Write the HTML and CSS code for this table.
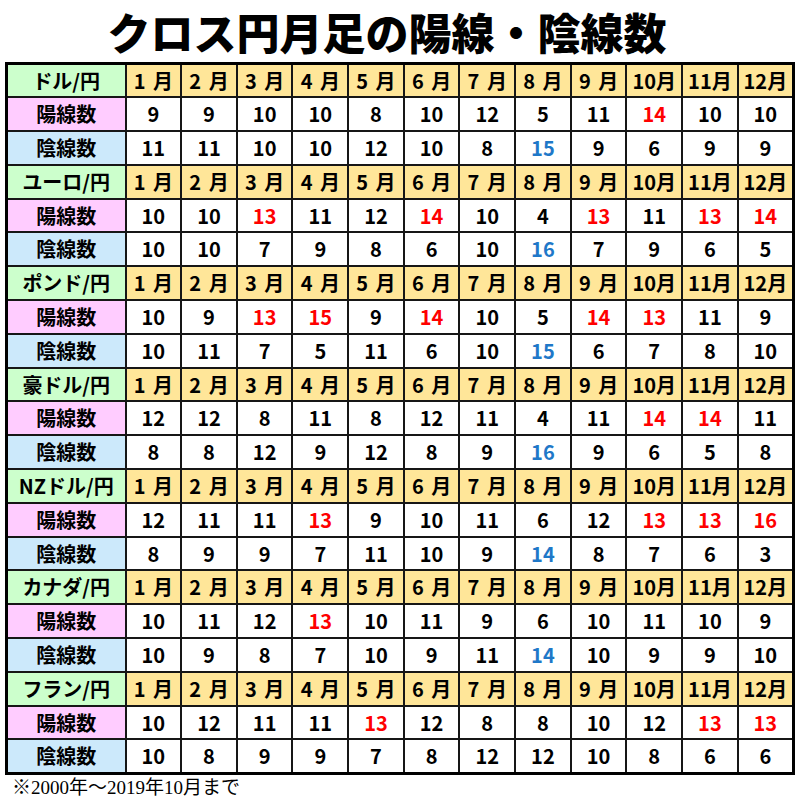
FILE: index.html
```html
<!DOCTYPE html>
<html lang="ja">
<head>
<meta charset="utf-8">
<link rel="stylesheet" href="styles.css">
</head>
<body>
<h1 class="title">クロス円月足の陽線・陰線数</h1>
<table class="grid">
<colgroup><col class="c-label"><col span="12" class="c-month"></colgroup>
<tbody>
<tr class="head"><th class="pair">ドル/円</th><th>1 月</th><th>2 月</th><th>3 月</th><th>4 月</th><th>5 月</th><th>6 月</th><th>7 月</th><th>8 月</th><th>9 月</th><th>10月</th><th>11月</th><th>12月</th></tr>
<tr><th class="yang">陽線数</th><td>9</td><td>9</td><td>10</td><td>10</td><td>8</td><td>10</td><td>12</td><td>5</td><td>11</td><td class="r">14</td><td>10</td><td>10</td></tr>
<tr><th class="yin">陰線数</th><td>11</td><td>11</td><td>10</td><td>10</td><td>12</td><td>10</td><td>8</td><td class="b">15</td><td>9</td><td>6</td><td>9</td><td>9</td></tr>
<tr class="head"><th class="pair">ユーロ/円</th><th>1 月</th><th>2 月</th><th>3 月</th><th>4 月</th><th>5 月</th><th>6 月</th><th>7 月</th><th>8 月</th><th>9 月</th><th>10月</th><th>11月</th><th>12月</th></tr>
<tr><th class="yang">陽線数</th><td>10</td><td>10</td><td class="r">13</td><td>11</td><td>12</td><td class="r">14</td><td>10</td><td>4</td><td class="r">13</td><td>11</td><td class="r">13</td><td class="r">14</td></tr>
<tr><th class="yin">陰線数</th><td>10</td><td>10</td><td>7</td><td>9</td><td>8</td><td>6</td><td>10</td><td class="b">16</td><td>7</td><td>9</td><td>6</td><td>5</td></tr>
<tr class="head"><th class="pair">ポンド/円</th><th>1 月</th><th>2 月</th><th>3 月</th><th>4 月</th><th>5 月</th><th>6 月</th><th>7 月</th><th>8 月</th><th>9 月</th><th>10月</th><th>11月</th><th>12月</th></tr>
<tr><th class="yang">陽線数</th><td>10</td><td>9</td><td class="r">13</td><td class="r">15</td><td>9</td><td class="r">14</td><td>10</td><td>5</td><td class="r">14</td><td class="r">13</td><td>11</td><td>9</td></tr>
<tr><th class="yin">陰線数</th><td>10</td><td>11</td><td>7</td><td>5</td><td>11</td><td>6</td><td>10</td><td class="b">15</td><td>6</td><td>7</td><td>8</td><td>10</td></tr>
<tr class="head"><th class="pair">豪ドル/円</th><th>1 月</th><th>2 月</th><th>3 月</th><th>4 月</th><th>5 月</th><th>6 月</th><th>7 月</th><th>8 月</th><th>9 月</th><th>10月</th><th>11月</th><th>12月</th></tr>
<tr><th class="yang">陽線数</th><td>12</td><td>12</td><td>8</td><td>11</td><td>8</td><td>12</td><td>11</td><td>4</td><td>11</td><td class="r">14</td><td class="r">14</td><td>11</td></tr>
<tr><th class="yin">陰線数</th><td>8</td><td>8</td><td>12</td><td>9</td><td>12</td><td>8</td><td>9</td><td class="b">16</td><td>9</td><td>6</td><td>5</td><td>8</td></tr>
<tr class="head"><th class="pair">NZドル/円</th><th>1 月</th><th>2 月</th><th>3 月</th><th>4 月</th><th>5 月</th><th>6 月</th><th>7 月</th><th>8 月</th><th>9 月</th><th>10月</th><th>11月</th><th>12月</th></tr>
<tr><th class="yang">陽線数</th><td>12</td><td>11</td><td>11</td><td class="r">13</td><td>9</td><td>10</td><td>11</td><td>6</td><td>12</td><td class="r">13</td><td class="r">13</td><td class="r">16</td></tr>
<tr><th class="yin">陰線数</th><td>8</td><td>9</td><td>9</td><td>7</td><td>11</td><td>10</td><td>9</td><td class="b">14</td><td>8</td><td>7</td><td>6</td><td>3</td></tr>
<tr class="head"><th class="pair">カナダ/円</th><th>1 月</th><th>2 月</th><th>3 月</th><th>4 月</th><th>5 月</th><th>6 月</th><th>7 月</th><th>8 月</th><th>9 月</th><th>10月</th><th>11月</th><th>12月</th></tr>
<tr><th class="yang">陽線数</th><td>10</td><td>11</td><td>12</td><td class="r">13</td><td>10</td><td>11</td><td>9</td><td>6</td><td>10</td><td>11</td><td>10</td><td>9</td></tr>
<tr><th class="yin">陰線数</th><td>10</td><td>9</td><td>8</td><td>7</td><td>10</td><td>9</td><td>11</td><td class="b">14</td><td>10</td><td>9</td><td>9</td><td>10</td></tr>
<tr class="head"><th class="pair">フラン/円</th><th>1 月</th><th>2 月</th><th>3 月</th><th>4 月</th><th>5 月</th><th>6 月</th><th>7 月</th><th>8 月</th><th>9 月</th><th>10月</th><th>11月</th><th>12月</th></tr>
<tr><th class="yang">陽線数</th><td>10</td><td>12</td><td>11</td><td>11</td><td class="r">13</td><td>12</td><td>8</td><td>8</td><td>10</td><td>12</td><td class="r">13</td><td class="r">13</td></tr>
<tr><th class="yin">陰線数</th><td>10</td><td>8</td><td>9</td><td>9</td><td>7</td><td>8</td><td>12</td><td>12</td><td>10</td><td>8</td><td>6</td><td>6</td></tr>
</tbody>
</table>
<p class="note">※2000年～2019年10月まで</p>
</body>
</html>
```

FILE: styles.css
```css
html, body {
  margin: 0;
  padding: 0;
  background: #ffffff;
}

body {
  width: 800px;
  font-family: "Noto Sans CJK JP", "Noto Sans", sans-serif;
  color: #000;
}

.title {
  margin: 0;
  height: 62px;
  display: flex;
  align-items: center;
  justify-content: center;
  padding-right: 26px;
  font-family: "Noto Sans CJK JP", sans-serif;
  font-weight: 900;
  font-size: 43px;
  line-height: 1;
}

.grid {
  margin-left: 5px;
  width: 790px;
  table-layout: fixed;
  border-collapse: collapse;
  border: 3px solid #000;
}

.c-label { width: 119px; }

.grid tr { height: 33.8px; }

.grid th,
.grid td {
  border: 2px solid #161616;
  padding: 0;
  text-align: center;
  vertical-align: middle;
  font-size: 20px;
  font-weight: 700;
  line-height: 1;
  white-space: nowrap;
}

.head th { background: #ffe699; word-spacing: 3px; }
.head th.pair { background: #ccffcc; word-spacing: 0; }
.yang { background: #ffccff; }
.yin { background: #cce9fb; }
.grid td { background: #fff; }

.grid td.r { color: #ff0000; }
.grid td.b { color: #1f78c8; }

.note {
  margin: 2px 0 0 12px;
  font-family: "Liberation Serif", "Noto Sans CJK JP", serif;
  font-size: 19px;
  line-height: 22px;
}
```
